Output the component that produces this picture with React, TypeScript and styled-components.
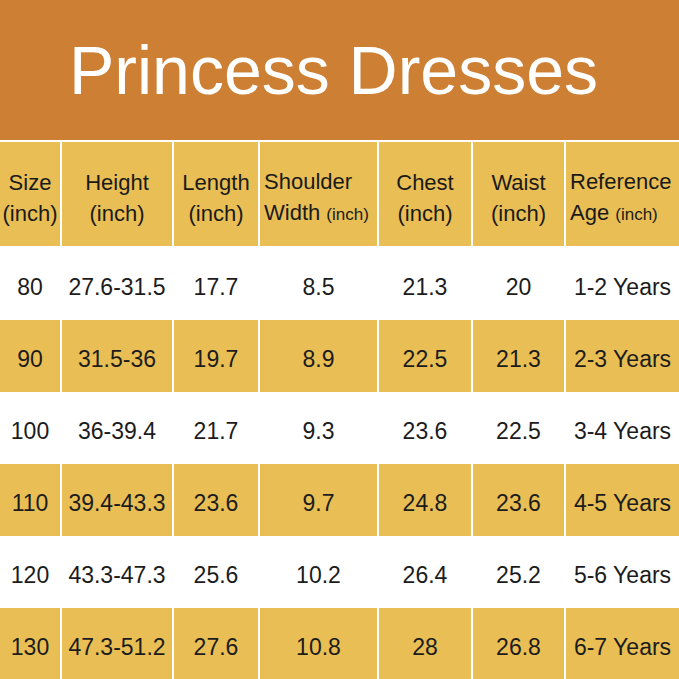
import React from 'react';
import styled, { createGlobalStyle } from 'styled-components';

const GlobalStyle = createGlobalStyle`
  html, body {
    margin: 0;
    padding: 0;
    background: #ffffff;
  }
  body {
    font-family: 'Liberation Sans', Arial, sans-serif;
  }
`;

const COLS = '60px 110px 84px 117px 92px 91px 1fr';

const Page = styled.div`
  width: 679px;
  height: 679px;
  overflow: hidden;
  display: flex;
  flex-flow: column nowrap;
  gap: 2px;
  background: #ffffff;
`;

const Banner = styled.div`
  height: 140px;
  flex-shrink: 0;
  background: #cd7f34;
  display: flex;
  align-items: center;
  justify-content: center;
  padding-right: 12px;
  box-sizing: border-box;
`;

const Title = styled.h1`
  margin: 0;
  color: #ffffff;
  font-weight: 400;
  font-size: 68px;
`;

const Row = styled.div<{ $height: number }>`
  display: grid;
  grid-template-columns: ${COLS};
  column-gap: 2px;
  height: ${(p) => p.$height}px;
  flex-shrink: 0;
`;

const HeadCell = styled.div<{ $left?: boolean }>`
  background: #e9bf55;
  color: #1a1a1a;
  display: flex;
  flex-flow: column nowrap;
  justify-content: center;
  align-items: ${(p) => (p.$left ? 'flex-start' : 'center')};
  text-align: ${(p) => (p.$left ? 'left' : 'center')};
  padding: 8px 0 0 ${(p) => (p.$left ? '4px' : '0')};
  font-size: 22px;
  line-height: 31px;
  white-space: nowrap;
`;

const Small = styled.span`
  font-size: 17px;
`;

const Cell = styled.div<{ $shade: boolean }>`
  background: ${(p) => (p.$shade ? '#e9bf55' : '#ffffff')};
  color: #1c1c1c;
  display: flex;
  align-items: center;
  justify-content: center;
  padding-top: 6px;
  box-sizing: border-box;
  font-size: 23px;
  white-space: nowrap;
`;

const rows = [
  ['80', '27.6-31.5', '17.7', '8.5', '21.3', '20', '1-2 Years'],
  ['90', '31.5-36', '19.7', '8.9', '22.5', '21.3', '2-3 Years'],
  ['100', '36-39.4', '21.7', '9.3', '23.6', '22.5', '3-4 Years'],
  ['110', '39.4-43.3', '23.6', '9.7', '24.8', '23.6', '4-5 Years'],
  ['120', '43.3-47.3', '25.6', '10.2', '26.4', '25.2', '5-6 Years'],
  ['130', '47.3-51.2', '27.6', '10.8', '28', '26.8', '6-7 Years'],
];

export default function App() {
  return (
    <Page>
      <GlobalStyle />
      <Banner>
        <Title>Princess Dresses</Title>
      </Banner>
      <Row $height={104}>
        <HeadCell>
          <span>Size</span>
          <span>(inch)</span>
        </HeadCell>
        <HeadCell>
          <span>Height</span>
          <span>(inch)</span>
        </HeadCell>
        <HeadCell>
          <span>Length</span>
          <span>(inch)</span>
        </HeadCell>
        <HeadCell $left>
          <span>Shoulder</span>
          <span>
            Width <Small>(inch)</Small>
          </span>
        </HeadCell>
        <HeadCell>
          <span>Chest</span>
          <span>(inch)</span>
        </HeadCell>
        <HeadCell>
          <span>Waist</span>
          <span>(inch)</span>
        </HeadCell>
        <HeadCell $left>
          <span>Reference</span>
          <span>
            Age <Small>(inch)</Small>
          </span>
        </HeadCell>
      </Row>
      <div>
        {rows.map((r, i) => (
          <Row key={r[0]} $height={72}>
            {r.map((v, j) => (
              <Cell key={j} $shade={i % 2 === 1}>
                {v}
              </Cell>
            ))}
          </Row>
        ))}
      </div>
    </Page>
  );
}
